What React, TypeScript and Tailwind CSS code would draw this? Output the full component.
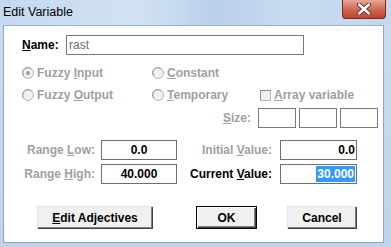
import React from 'react';

const font = "font-['Liberation_Sans',Arial,sans-serif]";

const Radio: React.FC<{ checked?: boolean }> = ({ checked }) => (
  <svg width="12" height="12" viewBox="0 0 12 12" className="shrink-0">
    <circle cx="6" cy="6" r="5.5" fill="#f0f0f0" stroke="#b4b4b4" />
    <path d="M2.2 9.2 A4.5 4.5 0 0 1 9.2 2.2" fill="none" stroke="#9a9a9a" strokeWidth="1" />
    {checked && <circle cx="6" cy="6" r="2" fill="#a0a0a0" />}
  </svg>
);

const Field: React.FC<{ value?: string; align?: 'center' | 'right'; selected?: boolean; w: string }> = ({ value = '', align = 'center', selected, w }) => (
  <div
    className={`${w} h-[20px] border border-[#6e6e6e] bg-white flex items-center font-bold text-[12px] text-black ${
      align === 'right' ? 'justify-end pr-[1px]' : 'justify-center'
    }`}
  >
    {selected ? (
      <span className="bg-[#3399ff] text-white leading-[16px] h-[16px] px-[1px]">{value}</span>
    ) : (
      <span className="leading-[16px]">{value}</span>
    )}
  </div>
);

const Btn: React.FC<{ children: React.ReactNode; w: string; isDefault?: boolean }> = ({ children, w, isDefault }) => (
  <div
    className={`${w} h-[23px] bg-[#f0f0f0] flex items-center justify-center font-bold text-[12px] text-black ${
      isDefault
        ? 'border border-black shadow-[inset_1px_1px_#ffffff,inset_-1px_-1px_#404040,inset_-2px_-2px_#808080]'
        : 'shadow-[inset_1px_1px_#e3e3e3,inset_-1px_-1px_#404040,inset_-2px_-2px_#808080]'
    }`}
  >
    {children}
  </div>
);

const U: React.FC<{ children: React.ReactNode }> = ({ children }) => (
  <span className="underline underline-offset-[1px] decoration-1">{children}</span>
);

export default function App() {
  return (
    <div className={`w-[391px] h-[247px] overflow-hidden flex flex-col bg-gradient-to-b from-[#c9dcf1] to-[#bfd4ec] ${font}`}>
      {/* title bar */}
      <div className="h-[25px] flex items-start shrink-0 bg-[linear-gradient(90deg,#c4d8ef_0%,#d2e2f4_35%,#b9d0ea_55%,#c9dbf0_75%,#c2d6ee_100%)]">
        <div className="pl-[3px] pt-[5px] text-[12.5px] leading-[15px] text-black">Edit Variable</div>
        <div className="ml-auto mr-[5px] w-[44px] h-[19px] rounded-b-[4px] border border-t-0 border-[#7b2a22] bg-gradient-to-b from-[#e7a596] via-[#d06a55] to-[#c2422e] flex items-center justify-center">
          <svg width="16" height="12" viewBox="0 0 16 12">
            <path d="M3 1.5 L13 10.5 M13 1.5 L3 10.5" stroke="#5a2a28" strokeWidth="4.2" strokeLinecap="round" />
            <path d="M3 1.5 L13 10.5 M13 1.5 L3 10.5" stroke="#ffffff" strokeWidth="2.4" strokeLinecap="round" />
          </svg>
        </div>
      </div>

      {/* client area */}
      <div className="ml-[3px] mr-[7px] h-[218px] bg-white border border-[#8ea4c0] border-t-[#9db2cc] flex flex-col text-[12px] font-bold">
        {/* name */}
        <div className="flex items-center pl-[18px] pt-[9px]">
          <div className="w-[44px] text-black"><U>N</U>ame:</div>
          <div className="w-[238px] h-[20px] border border-[#7a7a7a] flex items-center pl-[2px] font-normal text-[#6d6d6d]">rast</div>
        </div>

        {/* type options */}
        <div className="mt-[7px] pl-[18px] grid grid-cols-[130px_108px_auto] text-[#a0a0a0]">
          <div className="h-[22px] flex items-center gap-[3px]"><Radio checked /><span>Fuzzy <U>I</U>nput</span></div>
          <div className="h-[22px] flex items-center gap-[3px]"><Radio /><span><U>C</U>onstant</span></div>
          <div />
          <div className="h-[22px] flex items-center gap-[3px]"><Radio /><span>Fuzzy <U>O</U>utput</span></div>
          <div className="h-[22px] flex items-center gap-[3px]"><Radio /><span><U>T</U>emporary</span></div>
          <div className="h-[22px] flex items-center gap-[3px]">
            <div className="w-[11px] h-[11px] bg-[#f0f0f0] border border-[#b4b4b4] border-t-[#8c8c8c] border-l-[#8c8c8c]" />
            <span><U>A</U>rray variable</span>
          </div>
        </div>

        {/* size */}
        <div className="mt-[2px] flex items-center pl-[219px] text-[#a0a0a0]">
          <div className="w-[35px]"><U>S</U>ize:</div>
          <div className="flex gap-[3px]">
            <div className="w-[38px] h-[20px] border border-[#7a7a7a]" />
            <div className="w-[38px] h-[20px] border border-[#7a7a7a]" />
            <div className="w-[38px] h-[20px] border border-[#7a7a7a]" />
          </div>
        </div>

        {/* ranges */}
        <div className="mt-[12px] grid grid-cols-[91px_76px_91px_77px] gap-x-[6px] gap-y-[4px] items-center">
          <div className="text-right text-[#a0a0a0]">Range <U>L</U>ow:</div>
          <Field w="w-[76px]" value="0.0" />
          <div className="text-right text-[#a0a0a0] pr-[2px]">Initial <U>V</U>alue:</div>
          <Field w="w-[77px]" value="0.0" align="right" />
          <div className="text-right text-[#a0a0a0]">Range <U>H</U>igh:</div>
          <Field w="w-[76px]" value="40.000" />
          <div className="text-right text-black pr-[2px]">Current <U>V</U>alue:</div>
          <Field w="w-[77px]" value="30.000" align="right" selected />
        </div>

        {/* buttons */}
        <div className="mt-[22px] flex pl-[33px]">
          <Btn w="w-[116px]"><span><U>E</U>dit Adjectives</span></Btn>
          <div className="ml-[43px]"><Btn w="w-[61px]" isDefault>OK</Btn></div>
          <div className="ml-[30px]"><Btn w="w-[70px]">Cancel</Btn></div>
        </div>
      </div>
    </div>
  );
}
